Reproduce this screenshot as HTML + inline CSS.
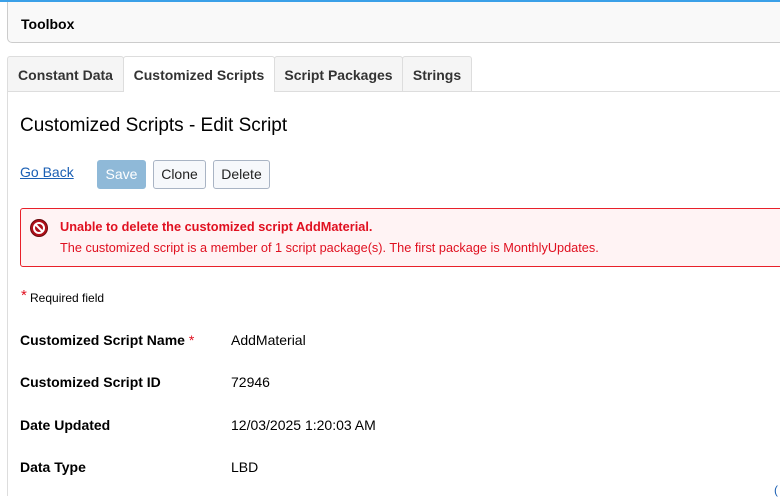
<!DOCTYPE html>
<html><head><style>
body{margin:0;width:780px;height:496px;overflow:hidden;background:#fff;font-family:"Liberation Sans",Arial,sans-serif;color:#000;position:relative}
.a{position:absolute}
.tab{position:absolute;top:56px;height:35px;border:1px solid #ddd;border-bottom:none;background:#f5f5f5;font-weight:bold;font-size:14px;color:#333;box-sizing:border-box;line-height:36px;text-align:center;border-radius:3px 3px 0 0}
.btn{position:absolute;top:160px;height:29px;box-sizing:border-box;border:1px solid #a9b4c4;border-radius:3px;background:#f6f8fb;font-size:14px;line-height:27px;text-align:center;color:#222}
.lbl{position:absolute;left:20px;font-weight:bold;font-size:14px}
.val{position:absolute;left:231px;font-size:14px}
.n{transform-origin:0 0;white-space:nowrap}
</style></head><body>
<div class="a" style="left:0;top:0;width:780px;height:2px;background:#3aa0e8"></div>
<div class="a" style="left:7px;top:2px;width:790px;height:41px;box-sizing:border-box;border:1px solid #ccc;border-top:none;border-radius:0 0 0 5px;background:#f9f9f9"></div>
<div class="a" style="left:21px;top:16px;font-weight:bold;font-size:14px">Toolbox</div>
<div class="a" style="left:7px;top:91px;width:780px;height:1px;background:#ddd"></div>
<div class="a" style="left:7px;top:91px;width:1px;height:405px;background:#ddd"></div>
<div class="tab" style="left:7px;width:117px">Constant Data</div>
<div class="tab" style="left:123px;width:152px;background:#fff;height:36px;color:#333">Customized Scripts</div>
<div class="tab" style="left:274px;width:129px">Script Packages</div>
<div class="tab" style="left:402px;width:70px">Strings</div>
<div class="a" style="left:20px;top:115px;font-size:19px">Customized Scripts - Edit Script</div>
<div class="a" style="left:20px;top:164px;font-size:14px;color:#1a5fb4;text-decoration:underline">Go Back</div>
<div class="btn" style="left:97px;width:49px;background:#8fb9d8;border-color:#8fb9d8;color:#fff">Save</div>
<div class="btn" style="left:153px;width:53px">Clone</div>
<div class="btn" style="left:213px;width:57px">Delete</div>
<div class="a" style="left:20px;top:208px;width:800px;height:59px;box-sizing:border-box;border:1px solid #e8202a;border-radius:3px;background:#fff3f4"></div>
<svg class="a" style="left:29px;top:218px" width="20" height="20" viewBox="0 0 20 20"><circle cx="10" cy="10" r="8.5" fill="#b0101a" stroke="#6a0a0e" stroke-width="1"/><circle cx="10" cy="10" r="5" fill="none" stroke="#fff" stroke-width="2"/><line x1="6.5" y1="6.5" x2="13.5" y2="13.5" stroke="#fff" stroke-width="2"/></svg>
<div class="a n" style="left:60px;top:219px;font-size:13px;font-weight:bold;color:#e01020;transform:scaleX(0.98)">Unable to delete the customized script AddMaterial.</div>
<div class="a n" style="left:60px;top:240px;font-size:13px;color:#e01020;transform:scaleX(0.979)">The customized script is a member of 1 script package(s). The first package is MonthlyUpdates.</div>
<div class="a" style="left:21px;top:287px;font-size:15px;color:#e01020">*</div>
<div class="a" style="left:30px;top:291px;font-size:12px">Required field</div>
<div class="lbl" style="top:332px">Customized Script Name <span style="color:#e01020;font-weight:normal">*</span></div><div class="val" style="top:332px">AddMaterial</div>
<div class="lbl" style="top:374px">Customized Script ID</div><div class="val" style="top:374px">72946</div>
<div class="lbl" style="top:417px">Date Updated</div><div class="val" style="top:417px">12/03/2025 1:20:03 AM</div>
<div class="lbl" style="top:459px">Data Type</div><div class="val" style="top:459px">LBD</div>
<div class="a" style="left:774px;top:483px;font-size:12px;color:#1a5fb4">(</div>
</body></html>
